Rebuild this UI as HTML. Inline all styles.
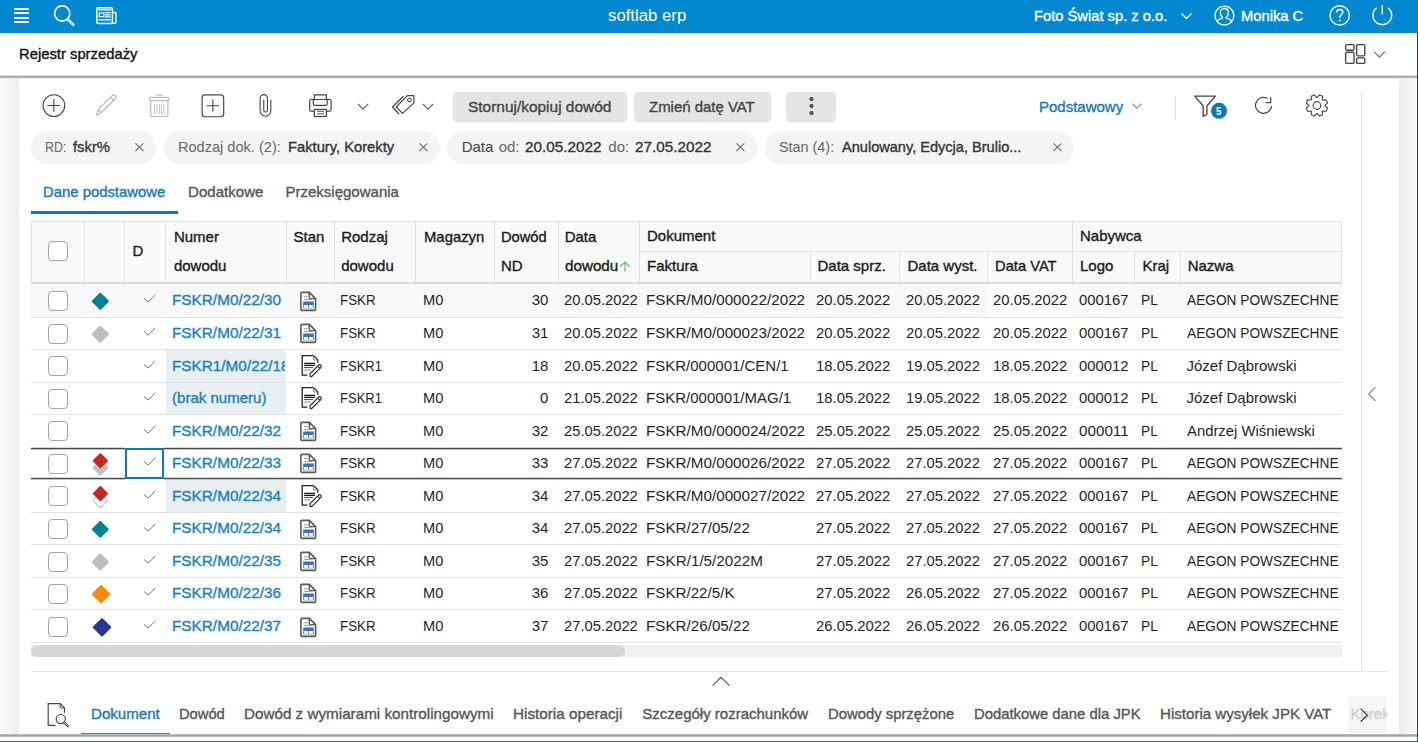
<!DOCTYPE html>
<html><head><meta charset="utf-8"><style>
html,body{margin:0;padding:0;width:1418px;height:742px;overflow:hidden;background:#fff;}
body{position:relative;font-family:"Liberation Sans",sans-serif;}
.t{position:absolute;white-space:nowrap;transform-origin:0 0;}
svg{overflow:visible}
</style></head><body>
<div style="position:absolute;left:0px;top:77px;width:1418px;height:665px;background:#f7f7f7;"></div>
<div style="position:absolute;left:0px;top:77px;width:19px;height:665px;background:linear-gradient(to right,#fafafa,#ededed);"></div>
<div style="position:absolute;left:1399px;top:77px;width:18px;height:665px;background:linear-gradient(to right,#ededed,#fafafa);"></div>
<div style="position:absolute;left:19px;top:79px;width:1380px;height:660px;background:#fff;border-radius:5px 5px 0 0;"></div>
<div style="position:absolute;left:0px;top:0px;width:1418px;height:33px;background:#0288d1;"></div>
<div style="position:absolute;left:14.2px;top:8.05px;width:14.7px;height:1.9px;background:#fff;"></div>
<div style="position:absolute;left:14.2px;top:12.45px;width:14.7px;height:1.9px;background:#fff;"></div>
<div style="position:absolute;left:14.2px;top:16.95px;width:14.7px;height:1.9px;background:#fff;"></div>
<div style="position:absolute;left:14.2px;top:21.15px;width:14.7px;height:1.9px;background:#fff;"></div>
<svg style="position:absolute;left:50px;top:2px;" width="30" height="30" viewBox="0 0 30 30" fill="none"><circle cx="12.2" cy="11.5" r="7.6" stroke="#fff" stroke-width="1.6"/><path d="M17.6 17.2 L23.3 22.8" stroke="#fff" stroke-width="2.6" stroke-linecap="round"/><path d="M17.9 17.5 L23 22.5" stroke="#0288d1" stroke-width="0.7" stroke-linecap="round"/></svg>
<svg style="position:absolute;left:94px;top:5px;" width="26" height="22" viewBox="0 0 26 22" fill="none"><rect x="2.8" y="2.8" width="15.6" height="15.6" rx="1.2" stroke="#fff" stroke-width="1.5"/><path d="M18.4 7.5 H21 a1 1 0 0 1 1 1 V16.8 a1.6 1.6 0 0 1 -1.6 1.6 H18" stroke="#fff" stroke-width="1.4"/><path d="M4 4.6 H17.2" stroke="#cfe6f5" stroke-width="2"/><rect x="5.3" y="8" width="4.6" height="3.6" stroke="#fff" stroke-width="1.2"/><path d="M11 7.7H16.5M11 9.8H16.5M11 11.9H16.5M4.5 14.8H16.8" stroke="#fff" stroke-width="1.2"/></svg>
<div class="t" style="left:607.50px;top:7.60px;font-size:16px;line-height:16px;color:#fff;transform:scaleX(1.0473);">softlab erp</div>
<div class="t" style="left:1033.60px;top:8.15px;font-size:15px;line-height:15px;color:#fff;-webkit-text-stroke:0.35px #fff;transform:scaleX(0.9809);">Foto Świat sp. z o.o.</div>
<svg style="position:absolute;left:1178px;top:10px;" width="16" height="12" viewBox="0 0 16 12" fill="none"><path d="M3.5 3.5 L8.5 8.5 L13.5 3.5" stroke="#fff" stroke-width="1.3"/></svg>
<svg style="position:absolute;left:1212px;top:3px;" width="26" height="26" viewBox="0 0 26 26" fill="none"><circle cx="12.4" cy="12.6" r="9.5" stroke="#fff" stroke-width="1.4"/><path d="M12.3 5.5 c-2.6 0 -4 2 -4 4.4 c0 2 1 3.3 2 4.1 v1.2 c-2.3 0.6 -4.6 1.6 -5.6 3.4 M12.3 5.5 c2.6 0 4 2 4 4.4 c0 2 -1 3.3 -2 4.1 v1.2 c2.3 0.6 4.6 1.6 5.6 3.4" stroke="#fff" stroke-width="1.3"/></svg>
<div class="t" style="left:1240.50px;top:8.25px;font-size:15px;line-height:15px;color:#fff;-webkit-text-stroke:0.35px #fff;transform:scaleX(0.9811);">Monika C</div>
<svg style="position:absolute;left:1327px;top:3px;" width="26" height="26" viewBox="0 0 26 26" fill="none"><circle cx="12.7" cy="12.4" r="9.7" stroke="#fff" stroke-width="1.4"/><path d="M9.6 9.6 c0-1.9 1.4-3.2 3.1-3.2 c1.8 0 3.1 1.2 3.1 2.9 c0 2.3 -3 2.4 -3 4.9 v0.6" stroke="#fff" stroke-width="1.5"/><circle cx="12.8" cy="17.6" r="1" fill="#fff"/></svg>
<svg style="position:absolute;left:1370px;top:3px;" width="26" height="26" viewBox="0 0 26 26" fill="none"><path d="M6.7 4.75 A9.4 9.4 0 1 0 17.9 4.75" stroke="#fff" stroke-width="1.4"/><path d="M12.3 2.2 V11.5" stroke="#fff" stroke-width="1.5"/></svg>
<div style="position:absolute;left:0px;top:33px;width:1418px;height:42px;background:#fff;"></div>
<div class="t" style="left:18.90px;top:46.15px;font-size:15px;line-height:15px;color:#111;-webkit-text-stroke:0.35px #111;transform:scaleX(0.9867);">Rejestr sprzedaży</div>
<svg style="position:absolute;left:1343px;top:42px;" width="24" height="24" viewBox="0 0 24 24" fill="none"><rect x="2.6" y="2.6" width="8.4" height="5.6" rx="1.2" stroke="#444" stroke-width="1.35"/><rect x="2.6" y="10.2" width="8.4" height="11.2" rx="1.2" stroke="#444" stroke-width="1.35"/><rect x="13.6" y="2.6" width="8.2" height="11.2" rx="1.2" stroke="#444" stroke-width="1.35"/><rect x="13.6" y="15.8" width="8.2" height="5.6" rx="1.2" stroke="#444" stroke-width="1.35"/></svg>
<svg style="position:absolute;left:1371px;top:48px;" width="18" height="12" viewBox="0 0 18 12" fill="none"><path d="M3.2 3.8 L8.5 9 L13.8 3.8" stroke="#666" stroke-width="1.1"/></svg>
<div style="position:absolute;left:0px;top:75px;width:1417px;height:1px;background:#dedede;"></div>
<div style="position:absolute;left:0px;top:76px;width:1417px;height:1px;background:#a9a9a9;"></div>
<div style="position:absolute;left:0px;top:77px;width:1417px;height:1px;background:#b0b0b0;"></div>
<div style="position:absolute;left:0px;top:78px;width:1417px;height:1px;background:#ececec;"></div>
<svg style="position:absolute;left:40px;top:92px;" width="28" height="28" viewBox="0 0 28 28" fill="none"><circle cx="13.9" cy="13.6" r="10.85" stroke="#444" stroke-width="1.1"/><path d="M7.3 13.5H20.2M13.8 7.1V19.8" stroke="#444" stroke-width="1.1"/></svg>
<svg style="position:absolute;left:93px;top:92px;" width="28" height="28" viewBox="0 0 28 28" fill="none"><path d="M3.6 23.2 L5.2 17.6 L19.4 3.4 a1.6 1.6 0 0 1 2.3 0 l0.8 0.8 a1.6 1.6 0 0 1 0 2.3 L8.3 20.7 Z M5.2 17.6 L8.3 20.7 M17.6 5.2 L20.7 8.3" stroke="#b5b5b5" stroke-width="1.2" stroke-linejoin="round"/></svg>
<svg style="position:absolute;left:146px;top:92px;" width="28" height="28" viewBox="0 0 28 28" fill="none"><path d="M10.3 3.05H16.4" stroke="#bdbdbd" stroke-width="1.3" stroke-linecap="round"/><rect x="3.5" y="5.3" width="19.6" height="3.4" rx="1.7" stroke="#bdbdbd" stroke-width="1.2"/><path d="M4.7 8.7V22.5a2 2 0 0 0 2 2H19.9a2 2 0 0 0 2-2V8.7" stroke="#bdbdbd" stroke-width="1.2"/><path d="M8.4 12.2V22.3M10.9 12.2V22.3M13.4 12.2V22.3M15.5 12.2V22.3M18 12.2V22.3" stroke="#c4c4c4" stroke-width="1"/></svg>
<svg style="position:absolute;left:199px;top:92px;" width="28" height="28" viewBox="0 0 28 28" fill="none"><rect x="3.1" y="2.9" width="21.6" height="21.8" rx="3" stroke="#444" stroke-width="1.15"/><path d="M13.9 7.6V19.8M7.8 13.7H20" stroke="#444" stroke-width="1.1"/></svg>
<svg style="position:absolute;left:252px;top:92px;" width="28" height="28" viewBox="0 0 28 28" fill="none"><path d="M11.75 7.9V18.2A1.85 1.85 0 0 0 15.45 18.2V6.3A3.67 3.67 0 0 0 8.1 6.3V18.9A5.35 5.35 0 0 0 18.8 18.9V7.9" stroke="#444" stroke-width="1.1"/></svg>
<svg style="position:absolute;left:306px;top:92px;" width="28" height="28" viewBox="0 0 28 28" fill="none"><path d="M8.3 7.5V2.85H20.4V7.5" stroke="#444" stroke-width="1.2"/><path d="M8.3 19.2H5.2a1.5 1.5 0 0 1-1.5-1.5V9a1.5 1.5 0 0 1 1.5-1.5H23.6a1.5 1.5 0 0 1 1.5 1.5V17.7a1.5 1.5 0 0 1-1.5 1.5H20.4" stroke="#444" stroke-width="1.2"/><path d="M7.3 7.5V12a1.4 1.4 0 0 0 1.4 1.4H19.8a1.4 1.4 0 0 0 1.4-1.4V7.5" stroke="#444" stroke-width="1.2"/><rect x="8.3" y="17.4" width="12.1" height="7.1" fill="#fff" stroke="#444" stroke-width="1.2"/><path d="M11 19.4H18M11 21.85H18" stroke="#777" stroke-width="1.1"/></svg>
<svg style="position:absolute;left:355px;top:100px;" width="16" height="12" viewBox="0 0 16 12" fill="none"><path d="M2.8 3.9 L8 9.1 L13.2 3.9" stroke="#555" stroke-width="1.1"/></svg>
<svg style="position:absolute;left:389px;top:92px;" width="30" height="28" viewBox="0 0 30 28" fill="none"><path d="M14.4 4.3L3.5 15L10.1 22.25" stroke="#444" stroke-width="1.2" stroke-linejoin="round"/><path d="M18.4 3.7H24.9V10.9L13.6 21.4L7.1 15Z" stroke="#444" stroke-width="1.2" stroke-linejoin="round"/><circle cx="20.4" cy="8.1" r="1.8" stroke="#444" stroke-width="1.1"/></svg>
<svg style="position:absolute;left:420px;top:100px;" width="16" height="12" viewBox="0 0 16 12" fill="none"><path d="M2.8 3.9 L8 9.1 L13.2 3.9" stroke="#555" stroke-width="1.1"/></svg>
<div style="position:absolute;left:453px;top:92px;width:174px;height:30px;background:#e4e4e4;border-radius:4px;"></div>
<div class="t" style="left:467.50px;top:98.65px;font-size:15px;line-height:15px;color:#444;-webkit-text-stroke:0.35px #444;transform:scaleX(1.0294);">Stornuj/kopiuj dowód</div>
<div style="position:absolute;left:634px;top:92px;width:137px;height:30px;background:#e4e4e4;border-radius:4px;"></div>
<div class="t" style="left:649.00px;top:98.65px;font-size:15px;line-height:15px;color:#444;-webkit-text-stroke:0.35px #444;transform:scaleX(0.9962);">Zmień datę VAT</div>
<div style="position:absolute;left:786px;top:92px;width:50px;height:30px;background:#e4e4e4;border-radius:4px;"></div>
<svg style="position:absolute;left:806px;top:93.5px;" width="10" height="10" viewBox="0 0 10 10" fill="none"><circle cx="5.5" cy="5" r="1.5" stroke="#3a3a3a" stroke-width="1.2" fill="#777"/></svg>
<svg style="position:absolute;left:806px;top:100.5px;" width="10" height="10" viewBox="0 0 10 10" fill="none"><circle cx="5.5" cy="5" r="1.5" stroke="#3a3a3a" stroke-width="1.2" fill="#777"/></svg>
<svg style="position:absolute;left:806px;top:107.7px;" width="10" height="10" viewBox="0 0 10 10" fill="none"><circle cx="5.5" cy="5" r="1.5" stroke="#3a3a3a" stroke-width="1.2" fill="#777"/></svg>
<div class="t" style="left:1039.00px;top:99.45px;font-size:15px;line-height:15px;color:#1776b8;-webkit-text-stroke:0.35px #1776b8;">Podstawowy</div>
<svg style="position:absolute;left:1129px;top:99px;" width="16" height="12" viewBox="0 0 16 12" fill="none"><path d="M3.3 4.6 L7.9 9.2 L12.5 4.6" stroke="#6f8fa6" stroke-width="1.1"/></svg>
<div style="position:absolute;left:1175px;top:96px;width:1px;height:24px;background:#dedede;"></div>
<svg style="position:absolute;left:1190px;top:92px;" width="34" height="30" viewBox="0 0 34 30" fill="none"><path d="M4.7 4.1 H25.4 L16.9 14 V22.3 L13.2 24.4 V14 Z" stroke="#444" stroke-width="1.3" stroke-linejoin="round"/><circle cx="29" cy="18.8" r="8" fill="#0a78bf"/></svg>
<div class="t" style="left:1216.10px;top:105.88px;font-size:10.5px;line-height:10.5px;color:#fff;font-weight:bold;transform:scaleX(0.9294);">5</div>
<svg style="position:absolute;left:1250px;top:92px;" width="28" height="28" viewBox="0 0 28 28" fill="none"><path d="M17.5 6.4A8 8 0 1 0 21.5 14" stroke="#444" stroke-width="1.2"/><path d="M20.7 5.3V10.7H15.7" stroke="#444" stroke-width="1.2"/></svg>
<svg style="position:absolute;left:1303px;top:92px;" width="28" height="28" viewBox="0 0 28 28" fill="none"><path d="M21.80 13.68 L24.51 16.01 L23.18 19.22 L19.61 18.96 L19.36 19.21 L19.62 22.78 L16.41 24.11 L14.08 21.40 L13.72 21.40 L11.39 24.11 L8.18 22.78 L8.44 19.21 L8.19 18.96 L4.62 19.22 L3.29 16.01 L6.00 13.68 L6.00 13.32 L3.29 10.99 L4.62 7.78 L8.19 8.04 L8.44 7.79 L8.18 4.22 L11.39 2.89 L13.72 5.60 L14.08 5.60 L16.41 2.89 L19.62 4.22 L19.36 7.79 L19.61 8.04 L23.18 7.78 L24.51 10.99 L21.80 13.32 Z" stroke="#444" stroke-width="1.05" stroke-linejoin="round"/><circle cx="13.9" cy="13.5" r="3.85" stroke="#444" stroke-width="1.1"/></svg>
<div style="position:absolute;left:31px;top:131px;width:125px;height:32.5px;background:#f4f4f4;border-radius:17px;"></div>
<div class="t" style="left:44.60px;top:138.75px;font-size:15px;line-height:15px;color:#666;transform:scaleX(0.8295);">RD:</div>
<div class="t" style="left:73.40px;top:138.75px;font-size:15px;line-height:15px;color:#333;-webkit-text-stroke:0.35px #333;transform:scaleX(0.9867);">fskr%</div>
<svg style="position:absolute;left:134.2px;top:141.8px;" width="12" height="12" viewBox="0 0 12 12" fill="none"><path d="M1.4 1.4 L9.4 9 M9.4 1.4 L1.4 9" stroke="#707070" stroke-width="1.05"/></svg>
<div style="position:absolute;left:164.2px;top:131px;width:275.5px;height:32.5px;background:#f4f4f4;border-radius:17px;"></div>
<div class="t" style="left:177.90px;top:138.75px;font-size:15px;line-height:15px;color:#666;transform:scaleX(0.9707);">Rodzaj dok. (2):</div>
<div class="t" style="left:288.10px;top:138.75px;font-size:15px;line-height:15px;color:#333;-webkit-text-stroke:0.35px #333;transform:scaleX(0.9815);">Faktury, Korekty</div>
<svg style="position:absolute;left:418px;top:141.8px;" width="12" height="12" viewBox="0 0 12 12" fill="none"><path d="M1.4 1.4 L9.4 9 M9.4 1.4 L1.4 9" stroke="#707070" stroke-width="1.05"/></svg>
<div style="position:absolute;left:447.4px;top:131px;width:309.6px;height:32.5px;background:#f4f4f4;border-radius:17px;"></div>
<div class="t" style="left:461.70px;top:138.75px;font-size:15px;line-height:15px;color:#444;">Data</div>
<div class="t" style="left:498.70px;top:138.75px;font-size:15px;line-height:15px;color:#666;">od:</div>
<div class="t" style="left:525.40px;top:138.75px;font-size:15px;line-height:15px;color:#333;-webkit-text-stroke:0.35px #333;transform:scaleX(1.0173);">20.05.2022</div>
<div class="t" style="left:608.30px;top:138.75px;font-size:15px;line-height:15px;color:#666;">do:</div>
<div class="t" style="left:635.00px;top:138.75px;font-size:15px;line-height:15px;color:#333;-webkit-text-stroke:0.35px #333;transform:scaleX(1.0173);">27.05.2022</div>
<svg style="position:absolute;left:735.2px;top:141.8px;" width="12" height="12" viewBox="0 0 12 12" fill="none"><path d="M1.4 1.4 L9.4 9 M9.4 1.4 L1.4 9" stroke="#707070" stroke-width="1.05"/></svg>
<div style="position:absolute;left:765.3px;top:131px;width:308.4000000000001px;height:32.5px;background:#f4f4f4;border-radius:17px;"></div>
<div class="t" style="left:779.20px;top:138.75px;font-size:15px;line-height:15px;color:#666;transform:scaleX(0.9583);">Stan (4):</div>
<div class="t" style="left:841.50px;top:138.75px;font-size:15px;line-height:15px;color:#333;-webkit-text-stroke:0.35px #333;transform:scaleX(0.9708);">Anulowany, Edycja, Brulio...</div>
<svg style="position:absolute;left:1052px;top:141.8px;" width="12" height="12" viewBox="0 0 12 12" fill="none"><path d="M1.4 1.4 L9.4 9 M9.4 1.4 L1.4 9" stroke="#707070" stroke-width="1.05"/></svg>
<div class="t" style="left:42.80px;top:183.75px;font-size:15px;line-height:15px;color:#1776b8;-webkit-text-stroke:0.35px #1776b8;transform:scaleX(0.9903);">Dane podstawowe</div>
<div class="t" style="left:187.50px;top:183.75px;font-size:15px;line-height:15px;color:#555;-webkit-text-stroke:0.35px #555;transform:scaleX(1.0053);">Dodatkowe</div>
<div class="t" style="left:285.50px;top:183.75px;font-size:15px;line-height:15px;color:#555;-webkit-text-stroke:0.35px #555;">Przeksięgowania</div>
<div style="position:absolute;left:30.6px;top:211px;width:147.3px;height:3px;background:#0a78bf;"></div>
<div style="position:absolute;left:31px;top:222px;width:1311px;height:60px;background:#f9f9f9;"></div>
<div style="position:absolute;left:31px;top:221px;width:1311px;height:1px;background:#e2e2e2;"></div>
<div style="position:absolute;left:31px;top:282px;width:1311px;height:2px;background:#dcdcdc;"></div>
<div style="position:absolute;left:31px;top:222px;width:1px;height:60px;background:#e2e2e2;"></div>
<div style="position:absolute;left:1341px;top:222px;width:1px;height:60px;background:#e2e2e2;"></div>
<div style="position:absolute;left:84px;top:222px;width:1px;height:60px;background:#e2e2e2;"></div>
<div style="position:absolute;left:124px;top:222px;width:1px;height:60px;background:#e2e2e2;"></div>
<div style="position:absolute;left:165px;top:222px;width:1px;height:60px;background:#e2e2e2;"></div>
<div style="position:absolute;left:286px;top:222px;width:1px;height:60px;background:#e2e2e2;"></div>
<div style="position:absolute;left:334px;top:222px;width:1px;height:60px;background:#e2e2e2;"></div>
<div style="position:absolute;left:415px;top:222px;width:1px;height:60px;background:#e2e2e2;"></div>
<div style="position:absolute;left:494px;top:222px;width:1px;height:60px;background:#e2e2e2;"></div>
<div style="position:absolute;left:558px;top:222px;width:1px;height:60px;background:#e2e2e2;"></div>
<div style="position:absolute;left:639px;top:222px;width:1px;height:60px;background:#e2e2e2;"></div>
<div style="position:absolute;left:1072px;top:222px;width:1px;height:60px;background:#e2e2e2;"></div>
<div style="position:absolute;left:810px;top:251px;width:1px;height:31px;background:#e2e2e2;"></div>
<div style="position:absolute;left:899px;top:251px;width:1px;height:31px;background:#e2e2e2;"></div>
<div style="position:absolute;left:987px;top:251px;width:1px;height:31px;background:#e2e2e2;"></div>
<div style="position:absolute;left:1134px;top:251px;width:1px;height:31px;background:#e2e2e2;"></div>
<div style="position:absolute;left:1180px;top:251px;width:1px;height:31px;background:#e2e2e2;"></div>
<div style="position:absolute;left:639px;top:251px;width:702px;height:1px;background:#e2e2e2;"></div>
<div style="position:absolute;left:48px;top:241px;width:20px;height:20px;box-sizing:border-box;border:1.3px solid #a5a5a5;border-radius:4px;background:#fff;"></div>
<div class="t" style="left:132.50px;top:243.35px;font-size:15px;line-height:15px;color:#1a1a1a;-webkit-text-stroke:0.35px #1a1a1a;">D</div>
<div class="t" style="left:173.90px;top:229.35px;font-size:15px;line-height:15px;color:#1a1a1a;-webkit-text-stroke:0.35px #1a1a1a;">Numer</div>
<div class="t" style="left:173.90px;top:257.55px;font-size:15px;line-height:15px;color:#1a1a1a;-webkit-text-stroke:0.35px #1a1a1a;">dowodu</div>
<div class="t" style="left:293.50px;top:229.35px;font-size:15px;line-height:15px;color:#1a1a1a;-webkit-text-stroke:0.35px #1a1a1a;">Stan</div>
<div class="t" style="left:341.20px;top:229.35px;font-size:15px;line-height:15px;color:#1a1a1a;-webkit-text-stroke:0.35px #1a1a1a;">Rodzaj</div>
<div class="t" style="left:341.20px;top:257.55px;font-size:15px;line-height:15px;color:#1a1a1a;-webkit-text-stroke:0.35px #1a1a1a;">dowodu</div>
<div class="t" style="left:423.80px;top:229.35px;font-size:15px;line-height:15px;color:#1a1a1a;-webkit-text-stroke:0.35px #1a1a1a;transform:scaleX(0.9901);">Magazyn</div>
<div class="t" style="left:501.00px;top:229.35px;font-size:15px;line-height:15px;color:#1a1a1a;-webkit-text-stroke:0.35px #1a1a1a;transform:scaleX(0.9764);">Dowód</div>
<div class="t" style="left:501.00px;top:257.55px;font-size:15px;line-height:15px;color:#1a1a1a;-webkit-text-stroke:0.35px #1a1a1a;">ND</div>
<div class="t" style="left:564.70px;top:229.35px;font-size:15px;line-height:15px;color:#1a1a1a;-webkit-text-stroke:0.35px #1a1a1a;">Data</div>
<div class="t" style="left:564.70px;top:257.55px;font-size:15px;line-height:15px;color:#1a1a1a;-webkit-text-stroke:0.35px #1a1a1a;transform:scaleX(1.0133);">dowodu</div>
<svg style="position:absolute;left:617px;top:258px;" width="14" height="16" viewBox="0 0 14 16" fill="none"><path d="M8 4 V13.5 M3.4 8.5 L8 4 L12.6 8.5" stroke="#6cc17c" stroke-width="1.3"/></svg>
<div class="t" style="left:647.00px;top:228.25px;font-size:15px;line-height:15px;color:#1a1a1a;-webkit-text-stroke:0.35px #1a1a1a;">Dokument</div>
<div class="t" style="left:647.00px;top:257.55px;font-size:15px;line-height:15px;color:#1a1a1a;-webkit-text-stroke:0.35px #1a1a1a;">Faktura</div>
<div class="t" style="left:817.50px;top:257.55px;font-size:15px;line-height:15px;color:#1a1a1a;-webkit-text-stroke:0.35px #1a1a1a;">Data sprz.</div>
<div class="t" style="left:907.50px;top:257.55px;font-size:15px;line-height:15px;color:#1a1a1a;-webkit-text-stroke:0.35px #1a1a1a;">Data wyst.</div>
<div class="t" style="left:994.70px;top:257.55px;font-size:15px;line-height:15px;color:#1a1a1a;-webkit-text-stroke:0.35px #1a1a1a;transform:scaleX(0.9809);">Data VAT</div>
<div class="t" style="left:1080.00px;top:228.25px;font-size:15px;line-height:15px;color:#1a1a1a;-webkit-text-stroke:0.35px #1a1a1a;">Nabywca</div>
<div class="t" style="left:1080.00px;top:257.55px;font-size:15px;line-height:15px;color:#1a1a1a;-webkit-text-stroke:0.35px #1a1a1a;">Logo</div>
<div class="t" style="left:1142.50px;top:257.55px;font-size:15px;line-height:15px;color:#1a1a1a;-webkit-text-stroke:0.35px #1a1a1a;">Kraj</div>
<div class="t" style="left:1187.70px;top:257.55px;font-size:15px;line-height:15px;color:#1a1a1a;-webkit-text-stroke:0.35px #1a1a1a;">Nazwa</div>
<div style="position:absolute;left:31px;top:284px;width:1311px;height:33px;background:#f8f8f8;"></div>
<div style="position:absolute;left:987px;top:284px;width:85px;height:33px;background:#fdfdfd;"></div>
<div style="position:absolute;left:31px;top:317px;width:1311px;height:1px;background:#e2e2e2;"></div>
<div style="position:absolute;left:48px;top:291px;width:20px;height:20px;box-sizing:border-box;border:1.3px solid #a5a5a5;border-radius:4px;background:#fff;"></div>
<svg style="position:absolute;left:85px;top:285px;" width="30" height="30" viewBox="0 0 30 30" fill="none"><path d="M15.3 8.8 L22.8 16.3 L15.3 23.8 L7.800000000000001 16.3 Z" fill="#00838f" stroke="#00838f" stroke-width="2" stroke-linejoin="round"/></svg>
<svg style="position:absolute;left:140px;top:291px;" width="18" height="16" viewBox="0 0 18 16" fill="none"><path d="M4 7.5 L8 11.1 L15.3 4" stroke="#777" stroke-width="1"/></svg>
<div class="t" style="left:172.30px;top:292.15px;font-size:15px;line-height:15px;color:#1a7fc2;-webkit-text-stroke:0.35px #1a7fc2;transform:scaleX(1.0216);">FSKR/M0/22/30</div>
<svg style="position:absolute;left:298px;top:289.5px;" width="22" height="22" viewBox="0 0 22 22" fill="none"><path d="M3.9 2.4H11.3L17.6 8.6V19.4a1 1 0 0 1-1 1H3.9a1 1 0 0 1-1-1V3.4a1 1 0 0 1 1-1Z" stroke="#5a5a5a" stroke-width="1.6" fill="#fff"/><path d="M11.3 2.4V7.6a1 1 0 0 0 1 1H17.6" stroke="#5a5a5a" stroke-width="1.4"/><path d="M6 6.8H9.8M6 9.4H14.4" stroke="#9a9a9a" stroke-width="1"/><rect x="5.2" y="11.5" width="10.6" height="3.8" fill="#2f77c1"/><rect x="5.2" y="15.3" width="10.6" height="2.6" fill="#fff"/><path d="M5.6 15.3V18M10.5 11.5V18M15.4 15.3V18" stroke="#6a6a6a" stroke-width="0.9"/><path d="M5.2 18.2H15.8" stroke="#b8b8b8" stroke-width="1"/></svg>
<div class="t" style="left:339.70px;top:292.15px;font-size:15px;line-height:15px;color:#1f1f1f;transform:scaleX(0.8900);">FSKR</div>
<div class="t" style="left:422.50px;top:292.15px;font-size:15px;line-height:15px;color:#1f1f1f;transform:scaleX(0.9760);">M0</div>
<div class="t" style="left:531.70px;top:292.15px;font-size:15px;line-height:15px;color:#1f1f1f;">30</div>
<div class="t" style="left:563.80px;top:292.15px;font-size:15px;line-height:15px;color:#1f1f1f;transform:scaleX(0.9827);">20.05.2022</div>
<div class="t" style="left:646.10px;top:292.15px;font-size:15px;line-height:15px;color:#1f1f1f;transform:scaleX(1.0147);">FSKR/M0/000022/2022</div>
<div class="t" style="left:816.10px;top:292.15px;font-size:15px;line-height:15px;color:#1f1f1f;transform:scaleX(0.9893);">20.05.2022</div>
<div class="t" style="left:906.30px;top:292.15px;font-size:15px;line-height:15px;color:#1f1f1f;transform:scaleX(0.9840);">20.05.2022</div>
<div class="t" style="left:993.40px;top:292.15px;font-size:15px;line-height:15px;color:#1f1f1f;transform:scaleX(0.9893);">20.05.2022</div>
<div class="t" style="left:1078.70px;top:292.15px;font-size:15px;line-height:15px;color:#1f1f1f;transform:scaleX(0.9900);">000167</div>
<div class="t" style="left:1141.20px;top:292.15px;font-size:15px;line-height:15px;color:#1f1f1f;transform:scaleX(0.9126);">PL</div>
<div style="position:absolute;left:1180px;top:284px;width:162px;height:33px;overflow:hidden;">
<div class="t" style="left:6.50px;top:8.15px;font-size:15px;line-height:15px;color:#1f1f1f;transform:scaleX(0.9138);">AEGON POWSZECHNE</div>
</div>
<div style="position:absolute;left:31px;top:349px;width:1311px;height:1px;background:#e2e2e2;"></div>
<div style="position:absolute;left:48px;top:324px;width:20px;height:20px;box-sizing:border-box;border:1.3px solid #a5a5a5;border-radius:4px;background:#fff;"></div>
<svg style="position:absolute;left:85px;top:318px;" width="30" height="30" viewBox="0 0 30 30" fill="none"><path d="M15.3 8.700000000000035 L22.8 16.200000000000035 L15.3 23.700000000000035 L7.800000000000001 16.200000000000035 Z" fill="#bdbdbd" stroke="#bdbdbd" stroke-width="2" stroke-linejoin="round"/></svg>
<svg style="position:absolute;left:140px;top:324px;" width="18" height="16" viewBox="0 0 18 16" fill="none"><path d="M4 7.5 L8 11.1 L15.3 4" stroke="#777" stroke-width="1"/></svg>
<div class="t" style="left:172.30px;top:325.05px;font-size:15px;line-height:15px;color:#1a7fc2;-webkit-text-stroke:0.35px #1a7fc2;transform:scaleX(1.0216);">FSKR/M0/22/31</div>
<svg style="position:absolute;left:298px;top:322.40000000000003px;" width="22" height="22" viewBox="0 0 22 22" fill="none"><path d="M3.9 2.4H11.3L17.6 8.6V19.4a1 1 0 0 1-1 1H3.9a1 1 0 0 1-1-1V3.4a1 1 0 0 1 1-1Z" stroke="#5a5a5a" stroke-width="1.6" fill="#fff"/><path d="M11.3 2.4V7.6a1 1 0 0 0 1 1H17.6" stroke="#5a5a5a" stroke-width="1.4"/><path d="M6 6.8H9.8M6 9.4H14.4" stroke="#9a9a9a" stroke-width="1"/><rect x="5.2" y="11.5" width="10.6" height="3.8" fill="#2f77c1"/><rect x="5.2" y="15.3" width="10.6" height="2.6" fill="#fff"/><path d="M5.6 15.3V18M10.5 11.5V18M15.4 15.3V18" stroke="#6a6a6a" stroke-width="0.9"/><path d="M5.2 18.2H15.8" stroke="#b8b8b8" stroke-width="1"/></svg>
<div class="t" style="left:339.70px;top:325.05px;font-size:15px;line-height:15px;color:#1f1f1f;transform:scaleX(0.8900);">FSKR</div>
<div class="t" style="left:422.50px;top:325.05px;font-size:15px;line-height:15px;color:#1f1f1f;transform:scaleX(0.9760);">M0</div>
<div class="t" style="left:531.70px;top:325.05px;font-size:15px;line-height:15px;color:#1f1f1f;">31</div>
<div class="t" style="left:563.80px;top:325.05px;font-size:15px;line-height:15px;color:#1f1f1f;transform:scaleX(0.9827);">20.05.2022</div>
<div class="t" style="left:646.10px;top:325.05px;font-size:15px;line-height:15px;color:#1f1f1f;transform:scaleX(1.0147);">FSKR/M0/000023/2022</div>
<div class="t" style="left:816.10px;top:325.05px;font-size:15px;line-height:15px;color:#1f1f1f;transform:scaleX(0.9893);">20.05.2022</div>
<div class="t" style="left:906.30px;top:325.05px;font-size:15px;line-height:15px;color:#1f1f1f;transform:scaleX(0.9840);">20.05.2022</div>
<div class="t" style="left:993.40px;top:325.05px;font-size:15px;line-height:15px;color:#1f1f1f;transform:scaleX(0.9893);">20.05.2022</div>
<div class="t" style="left:1078.70px;top:325.05px;font-size:15px;line-height:15px;color:#1f1f1f;transform:scaleX(0.9900);">000167</div>
<div class="t" style="left:1141.20px;top:325.05px;font-size:15px;line-height:15px;color:#1f1f1f;transform:scaleX(0.9126);">PL</div>
<div style="position:absolute;left:1180px;top:317px;width:162px;height:32px;overflow:hidden;">
<div class="t" style="left:6.50px;top:8.05px;font-size:15px;line-height:15px;color:#1f1f1f;transform:scaleX(0.9138);">AEGON POWSZECHNE</div>
</div>
<div style="position:absolute;left:165.5px;top:350px;width:120px;height:32px;background:#e9eff0;"></div>
<div style="position:absolute;left:31px;top:382px;width:1311px;height:1px;background:#e2e2e2;"></div>
<div style="position:absolute;left:48px;top:356px;width:20px;height:20px;box-sizing:border-box;border:1.3px solid #a5a5a5;border-radius:4px;background:#fff;"></div>
<svg style="position:absolute;left:140px;top:357px;" width="18" height="16" viewBox="0 0 18 16" fill="none"><path d="M4 7.5 L8 11.1 L15.3 4" stroke="#777" stroke-width="1"/></svg>
<div style="position:absolute;left:165px;top:349px;width:120px;height:33px;overflow:hidden;">
<div class="t" style="left:7.30px;top:8.65px;font-size:15px;line-height:15px;color:#1a7fc2;-webkit-text-stroke:0.35px #1a7fc2;transform:scaleX(1.0209);">FSKR1/M0/22/18</div>
</div>
<svg style="position:absolute;left:298px;top:354.0px;" width="26" height="24" viewBox="0 0 26 24" fill="none"><path d="M9.4 21.1H4.2V1.6H15.6L19.8 5.8V8.8" stroke="#222" stroke-width="1.3" fill="none"/><path d="M15.6 1.6V5.4a0.6 0.6 0 0 0 0.6 0.6H19.8" stroke="#888" stroke-width="1.1"/><path d="M6.2 9.4H17M6.2 11.4H17" stroke="#111" stroke-width="1.1"/><path d="M6.2 13.5H14.9" stroke="#555" stroke-width="1.1"/><path d="M6.2 15.9H12.8" stroke="#9a9a9a" stroke-width="1.2"/><path d="M12.2 22.6L11.9 19.8L20.6 11.1a1.4 1.4 0 0 1 2 0l0.3 0.3a1.4 1.4 0 0 1 0 2L14.2 22.1ZM19.6 12.1L21.9 14.4" stroke="#222" stroke-width="1.15" fill="#fff" stroke-linejoin="round"/></svg>
<div class="t" style="left:339.70px;top:357.65px;font-size:15px;line-height:15px;color:#1f1f1f;transform:scaleX(0.8675);">FSKR1</div>
<div class="t" style="left:422.50px;top:357.65px;font-size:15px;line-height:15px;color:#1f1f1f;transform:scaleX(0.9760);">M0</div>
<div class="t" style="left:531.70px;top:357.65px;font-size:15px;line-height:15px;color:#1f1f1f;">18</div>
<div class="t" style="left:563.80px;top:357.65px;font-size:15px;line-height:15px;color:#1f1f1f;transform:scaleX(0.9827);">20.05.2022</div>
<div class="t" style="left:646.10px;top:357.65px;font-size:15px;line-height:15px;color:#1f1f1f;">FSKR/000001/CEN/1</div>
<div class="t" style="left:816.10px;top:357.65px;font-size:15px;line-height:15px;color:#1f1f1f;transform:scaleX(0.9893);">18.05.2022</div>
<div class="t" style="left:906.30px;top:357.65px;font-size:15px;line-height:15px;color:#1f1f1f;transform:scaleX(0.9840);">19.05.2022</div>
<div class="t" style="left:993.40px;top:357.65px;font-size:15px;line-height:15px;color:#1f1f1f;transform:scaleX(0.9893);">18.05.2022</div>
<div class="t" style="left:1078.70px;top:357.65px;font-size:15px;line-height:15px;color:#1f1f1f;transform:scaleX(0.9900);">000012</div>
<div class="t" style="left:1141.20px;top:357.65px;font-size:15px;line-height:15px;color:#1f1f1f;transform:scaleX(0.9126);">PL</div>
<div style="position:absolute;left:1180px;top:349px;width:162px;height:33px;overflow:hidden;">
<div class="t" style="left:6.50px;top:8.65px;font-size:15px;line-height:15px;color:#1f1f1f;">Józef Dąbrowski</div>
</div>
<div style="position:absolute;left:165.5px;top:383px;width:120px;height:31px;background:#e9eff0;"></div>
<div style="position:absolute;left:31px;top:414px;width:1311px;height:1px;background:#e2e2e2;"></div>
<div style="position:absolute;left:48px;top:389px;width:20px;height:20px;box-sizing:border-box;border:1.3px solid #a5a5a5;border-radius:4px;background:#fff;"></div>
<svg style="position:absolute;left:140px;top:389px;" width="18" height="16" viewBox="0 0 18 16" fill="none"><path d="M4 7.5 L8 11.1 L15.3 4" stroke="#777" stroke-width="1"/></svg>
<div class="t" style="left:172.30px;top:390.05px;font-size:15px;line-height:15px;color:#1a7fc2;-webkit-text-stroke:0.35px #1a7fc2;transform:scaleX(1.0032);">(brak numeru)</div>
<svg style="position:absolute;left:298px;top:386.40000000000003px;" width="26" height="24" viewBox="0 0 26 24" fill="none"><path d="M9.4 21.1H4.2V1.6H15.6L19.8 5.8V8.8" stroke="#222" stroke-width="1.3" fill="none"/><path d="M15.6 1.6V5.4a0.6 0.6 0 0 0 0.6 0.6H19.8" stroke="#888" stroke-width="1.1"/><path d="M6.2 9.4H17M6.2 11.4H17" stroke="#111" stroke-width="1.1"/><path d="M6.2 13.5H14.9" stroke="#555" stroke-width="1.1"/><path d="M6.2 15.9H12.8" stroke="#9a9a9a" stroke-width="1.2"/><path d="M12.2 22.6L11.9 19.8L20.6 11.1a1.4 1.4 0 0 1 2 0l0.3 0.3a1.4 1.4 0 0 1 0 2L14.2 22.1ZM19.6 12.1L21.9 14.4" stroke="#222" stroke-width="1.15" fill="#fff" stroke-linejoin="round"/></svg>
<div class="t" style="left:339.70px;top:390.05px;font-size:15px;line-height:15px;color:#1f1f1f;transform:scaleX(0.8675);">FSKR1</div>
<div class="t" style="left:422.50px;top:390.05px;font-size:15px;line-height:15px;color:#1f1f1f;transform:scaleX(0.9760);">M0</div>
<div class="t" style="left:540.10px;top:390.05px;font-size:15px;line-height:15px;color:#1f1f1f;">0</div>
<div class="t" style="left:563.80px;top:390.05px;font-size:15px;line-height:15px;color:#1f1f1f;transform:scaleX(0.9827);">21.05.2022</div>
<div class="t" style="left:646.10px;top:390.05px;font-size:15px;line-height:15px;color:#1f1f1f;">FSKR/000001/MAG/1</div>
<div class="t" style="left:816.10px;top:390.05px;font-size:15px;line-height:15px;color:#1f1f1f;transform:scaleX(0.9893);">18.05.2022</div>
<div class="t" style="left:906.30px;top:390.05px;font-size:15px;line-height:15px;color:#1f1f1f;transform:scaleX(0.9840);">19.05.2022</div>
<div class="t" style="left:993.40px;top:390.05px;font-size:15px;line-height:15px;color:#1f1f1f;transform:scaleX(0.9893);">18.05.2022</div>
<div class="t" style="left:1078.70px;top:390.05px;font-size:15px;line-height:15px;color:#1f1f1f;transform:scaleX(0.9900);">000012</div>
<div class="t" style="left:1141.20px;top:390.05px;font-size:15px;line-height:15px;color:#1f1f1f;transform:scaleX(0.9126);">PL</div>
<div style="position:absolute;left:1180px;top:382px;width:162px;height:32px;overflow:hidden;">
<div class="t" style="left:6.50px;top:8.05px;font-size:15px;line-height:15px;color:#1f1f1f;">Józef Dąbrowski</div>
</div>
<div style="position:absolute;left:31px;top:448px;width:1311px;height:1px;background:#e2e2e2;"></div>
<div style="position:absolute;left:48px;top:421px;width:20px;height:20px;box-sizing:border-box;border:1.3px solid #a5a5a5;border-radius:4px;background:#fff;"></div>
<svg style="position:absolute;left:140px;top:422px;" width="18" height="16" viewBox="0 0 18 16" fill="none"><path d="M4 7.5 L8 11.1 L15.3 4" stroke="#777" stroke-width="1"/></svg>
<div class="t" style="left:172.30px;top:422.65px;font-size:15px;line-height:15px;color:#1a7fc2;-webkit-text-stroke:0.35px #1a7fc2;transform:scaleX(1.0216);">FSKR/M0/22/32</div>
<svg style="position:absolute;left:298px;top:420.0px;" width="22" height="22" viewBox="0 0 22 22" fill="none"><path d="M3.9 2.4H11.3L17.6 8.6V19.4a1 1 0 0 1-1 1H3.9a1 1 0 0 1-1-1V3.4a1 1 0 0 1 1-1Z" stroke="#5a5a5a" stroke-width="1.6" fill="#fff"/><path d="M11.3 2.4V7.6a1 1 0 0 0 1 1H17.6" stroke="#5a5a5a" stroke-width="1.4"/><path d="M6 6.8H9.8M6 9.4H14.4" stroke="#9a9a9a" stroke-width="1"/><rect x="5.2" y="11.5" width="10.6" height="3.8" fill="#2f77c1"/><rect x="5.2" y="15.3" width="10.6" height="2.6" fill="#fff"/><path d="M5.6 15.3V18M10.5 11.5V18M15.4 15.3V18" stroke="#6a6a6a" stroke-width="0.9"/><path d="M5.2 18.2H15.8" stroke="#b8b8b8" stroke-width="1"/></svg>
<div class="t" style="left:339.70px;top:422.65px;font-size:15px;line-height:15px;color:#1f1f1f;transform:scaleX(0.8900);">FSKR</div>
<div class="t" style="left:422.50px;top:422.65px;font-size:15px;line-height:15px;color:#1f1f1f;transform:scaleX(0.9760);">M0</div>
<div class="t" style="left:531.70px;top:422.65px;font-size:15px;line-height:15px;color:#1f1f1f;">32</div>
<div class="t" style="left:563.80px;top:422.65px;font-size:15px;line-height:15px;color:#1f1f1f;transform:scaleX(0.9827);">25.05.2022</div>
<div class="t" style="left:646.10px;top:422.65px;font-size:15px;line-height:15px;color:#1f1f1f;transform:scaleX(1.0147);">FSKR/M0/000024/2022</div>
<div class="t" style="left:816.10px;top:422.65px;font-size:15px;line-height:15px;color:#1f1f1f;transform:scaleX(0.9893);">25.05.2022</div>
<div class="t" style="left:906.30px;top:422.65px;font-size:15px;line-height:15px;color:#1f1f1f;transform:scaleX(0.9840);">25.05.2022</div>
<div class="t" style="left:993.40px;top:422.65px;font-size:15px;line-height:15px;color:#1f1f1f;transform:scaleX(0.9893);">25.05.2022</div>
<div class="t" style="left:1078.70px;top:422.65px;font-size:15px;line-height:15px;color:#1f1f1f;transform:scaleX(1.0143);">000011</div>
<div class="t" style="left:1141.20px;top:422.65px;font-size:15px;line-height:15px;color:#1f1f1f;transform:scaleX(0.9126);">PL</div>
<div style="position:absolute;left:1180px;top:414px;width:162px;height:34px;overflow:hidden;">
<div class="t" style="left:6.50px;top:8.65px;font-size:15px;line-height:15px;color:#1f1f1f;transform:scaleX(0.9892);">Andrzej Wiśniewski</div>
</div>
<div style="position:absolute;left:31px;top:478px;width:1311px;height:1px;background:#e2e2e2;"></div>
<div style="position:absolute;left:48px;top:454px;width:20px;height:20px;box-sizing:border-box;border:1.3px solid #a5a5a5;border-radius:4px;background:#fff;"></div>
<svg style="position:absolute;left:85px;top:448px;" width="30" height="30" viewBox="0 0 30 30" fill="none"><path d="M15.4 12.800000000000022 L22.4 19.800000000000022 L15.4 26.800000000000022 L8.4 19.800000000000022 Z" fill="#c4c4c4" stroke="#c4c4c4" stroke-width="2" stroke-linejoin="round"/><path d="M15.4 6.200000000000022 L22.0 12.800000000000022 L15.4 19.40000000000002 L8.8 12.800000000000022 Z" fill="#c62828" stroke="#c62828" stroke-width="2" stroke-linejoin="round"/></svg>
<svg style="position:absolute;left:140px;top:454px;" width="18" height="16" viewBox="0 0 18 16" fill="none"><path d="M4 7.5 L8 11.1 L15.3 4" stroke="#777" stroke-width="1"/></svg>
<div class="t" style="left:172.30px;top:454.75px;font-size:15px;line-height:15px;color:#1a7fc2;-webkit-text-stroke:0.35px #1a7fc2;transform:scaleX(1.0216);">FSKR/M0/22/33</div>
<svg style="position:absolute;left:298px;top:452.1px;" width="22" height="22" viewBox="0 0 22 22" fill="none"><path d="M3.9 2.4H11.3L17.6 8.6V19.4a1 1 0 0 1-1 1H3.9a1 1 0 0 1-1-1V3.4a1 1 0 0 1 1-1Z" stroke="#5a5a5a" stroke-width="1.6" fill="#fff"/><path d="M11.3 2.4V7.6a1 1 0 0 0 1 1H17.6" stroke="#5a5a5a" stroke-width="1.4"/><path d="M6 6.8H9.8M6 9.4H14.4" stroke="#9a9a9a" stroke-width="1"/><rect x="5.2" y="11.5" width="10.6" height="3.8" fill="#2f77c1"/><rect x="5.2" y="15.3" width="10.6" height="2.6" fill="#fff"/><path d="M5.6 15.3V18M10.5 11.5V18M15.4 15.3V18" stroke="#6a6a6a" stroke-width="0.9"/><path d="M5.2 18.2H15.8" stroke="#b8b8b8" stroke-width="1"/></svg>
<div class="t" style="left:339.70px;top:454.75px;font-size:15px;line-height:15px;color:#1f1f1f;transform:scaleX(0.8900);">FSKR</div>
<div class="t" style="left:422.50px;top:454.75px;font-size:15px;line-height:15px;color:#1f1f1f;transform:scaleX(0.9760);">M0</div>
<div class="t" style="left:531.70px;top:454.75px;font-size:15px;line-height:15px;color:#1f1f1f;">33</div>
<div class="t" style="left:563.80px;top:454.75px;font-size:15px;line-height:15px;color:#1f1f1f;transform:scaleX(0.9827);">27.05.2022</div>
<div class="t" style="left:646.10px;top:454.75px;font-size:15px;line-height:15px;color:#1f1f1f;transform:scaleX(1.0147);">FSKR/M0/000026/2022</div>
<div class="t" style="left:816.10px;top:454.75px;font-size:15px;line-height:15px;color:#1f1f1f;transform:scaleX(0.9893);">27.05.2022</div>
<div class="t" style="left:906.30px;top:454.75px;font-size:15px;line-height:15px;color:#1f1f1f;transform:scaleX(0.9840);">27.05.2022</div>
<div class="t" style="left:993.40px;top:454.75px;font-size:15px;line-height:15px;color:#1f1f1f;transform:scaleX(0.9893);">27.05.2022</div>
<div class="t" style="left:1078.70px;top:454.75px;font-size:15px;line-height:15px;color:#1f1f1f;transform:scaleX(0.9900);">000167</div>
<div class="t" style="left:1141.20px;top:454.75px;font-size:15px;line-height:15px;color:#1f1f1f;transform:scaleX(0.9126);">PL</div>
<div style="position:absolute;left:1180px;top:448px;width:162px;height:30px;overflow:hidden;">
<div class="t" style="left:6.50px;top:6.75px;font-size:15px;line-height:15px;color:#1f1f1f;transform:scaleX(0.9138);">AEGON POWSZECHNE</div>
</div>
<div style="position:absolute;left:165.5px;top:479px;width:120px;height:33px;background:#e9eff0;"></div>
<div style="position:absolute;left:31px;top:512px;width:1311px;height:1px;background:#e2e2e2;"></div>
<div style="position:absolute;left:48px;top:486px;width:20px;height:20px;box-sizing:border-box;border:1.3px solid #a5a5a5;border-radius:4px;background:#fff;"></div>
<svg style="position:absolute;left:85px;top:481px;" width="30" height="30" viewBox="0 0 30 30" fill="none"><path d="M15.4 12.200000000000033 L22.8 19.600000000000033 L15.4 27.000000000000036 L8.0 19.600000000000033 Z" fill="#fff" stroke="#c8c8c8" stroke-width="1.1" stroke-linejoin="round"/><path d="M15.4 6.000000000000034 L22.0 12.600000000000033 L15.4 19.20000000000003 L8.8 12.600000000000033 Z" fill="#c62828" stroke="#c62828" stroke-width="2" stroke-linejoin="round"/></svg>
<svg style="position:absolute;left:140px;top:487px;" width="18" height="16" viewBox="0 0 18 16" fill="none"><path d="M4 7.5 L8 11.1 L15.3 4" stroke="#777" stroke-width="1"/></svg>
<div class="t" style="left:172.30px;top:487.55px;font-size:15px;line-height:15px;color:#1a7fc2;-webkit-text-stroke:0.35px #1a7fc2;transform:scaleX(1.0216);">FSKR/M0/22/34</div>
<svg style="position:absolute;left:298px;top:483.90000000000003px;" width="26" height="24" viewBox="0 0 26 24" fill="none"><path d="M9.4 21.1H4.2V1.6H15.6L19.8 5.8V8.8" stroke="#222" stroke-width="1.3" fill="none"/><path d="M15.6 1.6V5.4a0.6 0.6 0 0 0 0.6 0.6H19.8" stroke="#888" stroke-width="1.1"/><path d="M6.2 9.4H17M6.2 11.4H17" stroke="#111" stroke-width="1.1"/><path d="M6.2 13.5H14.9" stroke="#555" stroke-width="1.1"/><path d="M6.2 15.9H12.8" stroke="#9a9a9a" stroke-width="1.2"/><path d="M12.2 22.6L11.9 19.8L20.6 11.1a1.4 1.4 0 0 1 2 0l0.3 0.3a1.4 1.4 0 0 1 0 2L14.2 22.1ZM19.6 12.1L21.9 14.4" stroke="#222" stroke-width="1.15" fill="#fff" stroke-linejoin="round"/></svg>
<div class="t" style="left:339.70px;top:487.55px;font-size:15px;line-height:15px;color:#1f1f1f;transform:scaleX(0.8900);">FSKR</div>
<div class="t" style="left:422.50px;top:487.55px;font-size:15px;line-height:15px;color:#1f1f1f;transform:scaleX(0.9760);">M0</div>
<div class="t" style="left:531.70px;top:487.55px;font-size:15px;line-height:15px;color:#1f1f1f;">34</div>
<div class="t" style="left:563.80px;top:487.55px;font-size:15px;line-height:15px;color:#1f1f1f;transform:scaleX(0.9827);">27.05.2022</div>
<div class="t" style="left:646.10px;top:487.55px;font-size:15px;line-height:15px;color:#1f1f1f;transform:scaleX(1.0147);">FSKR/M0/000027/2022</div>
<div class="t" style="left:816.10px;top:487.55px;font-size:15px;line-height:15px;color:#1f1f1f;transform:scaleX(0.9893);">27.05.2022</div>
<div class="t" style="left:906.30px;top:487.55px;font-size:15px;line-height:15px;color:#1f1f1f;transform:scaleX(0.9840);">27.05.2022</div>
<div class="t" style="left:993.40px;top:487.55px;font-size:15px;line-height:15px;color:#1f1f1f;transform:scaleX(0.9893);">27.05.2022</div>
<div class="t" style="left:1078.70px;top:487.55px;font-size:15px;line-height:15px;color:#1f1f1f;transform:scaleX(0.9900);">000167</div>
<div class="t" style="left:1141.20px;top:487.55px;font-size:15px;line-height:15px;color:#1f1f1f;transform:scaleX(0.9126);">PL</div>
<div style="position:absolute;left:1180px;top:478px;width:162px;height:34px;overflow:hidden;">
<div class="t" style="left:6.50px;top:9.55px;font-size:15px;line-height:15px;color:#1f1f1f;transform:scaleX(0.9138);">AEGON POWSZECHNE</div>
</div>
<div style="position:absolute;left:31px;top:544px;width:1311px;height:1px;background:#e2e2e2;"></div>
<div style="position:absolute;left:48px;top:519px;width:20px;height:20px;box-sizing:border-box;border:1.3px solid #a5a5a5;border-radius:4px;background:#fff;"></div>
<svg style="position:absolute;left:85px;top:514px;" width="30" height="30" viewBox="0 0 30 30" fill="none"><path d="M15.3 7.9000000000000234 L22.8 15.400000000000023 L15.3 22.900000000000023 L7.800000000000001 15.400000000000023 Z" fill="#00838f" stroke="#00838f" stroke-width="2" stroke-linejoin="round"/></svg>
<svg style="position:absolute;left:140px;top:520px;" width="18" height="16" viewBox="0 0 18 16" fill="none"><path d="M4 7.5 L8 11.1 L15.3 4" stroke="#777" stroke-width="1"/></svg>
<div class="t" style="left:172.30px;top:520.25px;font-size:15px;line-height:15px;color:#1a7fc2;-webkit-text-stroke:0.35px #1a7fc2;transform:scaleX(1.0216);">FSKR/M0/22/34</div>
<svg style="position:absolute;left:298px;top:517.6px;" width="22" height="22" viewBox="0 0 22 22" fill="none"><path d="M3.9 2.4H11.3L17.6 8.6V19.4a1 1 0 0 1-1 1H3.9a1 1 0 0 1-1-1V3.4a1 1 0 0 1 1-1Z" stroke="#5a5a5a" stroke-width="1.6" fill="#fff"/><path d="M11.3 2.4V7.6a1 1 0 0 0 1 1H17.6" stroke="#5a5a5a" stroke-width="1.4"/><path d="M6 6.8H9.8M6 9.4H14.4" stroke="#9a9a9a" stroke-width="1"/><rect x="5.2" y="11.5" width="10.6" height="3.8" fill="#2f77c1"/><rect x="5.2" y="15.3" width="10.6" height="2.6" fill="#fff"/><path d="M5.6 15.3V18M10.5 11.5V18M15.4 15.3V18" stroke="#6a6a6a" stroke-width="0.9"/><path d="M5.2 18.2H15.8" stroke="#b8b8b8" stroke-width="1"/></svg>
<div class="t" style="left:339.70px;top:520.25px;font-size:15px;line-height:15px;color:#1f1f1f;transform:scaleX(0.8900);">FSKR</div>
<div class="t" style="left:422.50px;top:520.25px;font-size:15px;line-height:15px;color:#1f1f1f;transform:scaleX(0.9760);">M0</div>
<div class="t" style="left:531.70px;top:520.25px;font-size:15px;line-height:15px;color:#1f1f1f;">34</div>
<div class="t" style="left:563.80px;top:520.25px;font-size:15px;line-height:15px;color:#1f1f1f;transform:scaleX(0.9827);">27.05.2022</div>
<div class="t" style="left:646.10px;top:520.25px;font-size:15px;line-height:15px;color:#1f1f1f;transform:scaleX(1.0136);">FSKR/27/05/22</div>
<div class="t" style="left:816.10px;top:520.25px;font-size:15px;line-height:15px;color:#1f1f1f;transform:scaleX(0.9893);">27.05.2022</div>
<div class="t" style="left:906.30px;top:520.25px;font-size:15px;line-height:15px;color:#1f1f1f;transform:scaleX(0.9840);">27.05.2022</div>
<div class="t" style="left:993.40px;top:520.25px;font-size:15px;line-height:15px;color:#1f1f1f;transform:scaleX(0.9893);">27.05.2022</div>
<div class="t" style="left:1078.70px;top:520.25px;font-size:15px;line-height:15px;color:#1f1f1f;transform:scaleX(0.9900);">000167</div>
<div class="t" style="left:1141.20px;top:520.25px;font-size:15px;line-height:15px;color:#1f1f1f;transform:scaleX(0.9126);">PL</div>
<div style="position:absolute;left:1180px;top:512px;width:162px;height:32px;overflow:hidden;">
<div class="t" style="left:6.50px;top:8.25px;font-size:15px;line-height:15px;color:#1f1f1f;transform:scaleX(0.9138);">AEGON POWSZECHNE</div>
</div>
<div style="position:absolute;left:31px;top:577px;width:1311px;height:1px;background:#e2e2e2;"></div>
<div style="position:absolute;left:48px;top:552px;width:20px;height:20px;box-sizing:border-box;border:1.3px solid #a5a5a5;border-radius:4px;background:#fff;"></div>
<svg style="position:absolute;left:85px;top:546px;" width="30" height="30" viewBox="0 0 30 30" fill="none"><path d="M15.3 8.500000000000046 L22.8 16.000000000000046 L15.3 23.500000000000046 L7.800000000000001 16.000000000000046 Z" fill="#bdbdbd" stroke="#bdbdbd" stroke-width="2" stroke-linejoin="round"/></svg>
<svg style="position:absolute;left:140px;top:552px;" width="18" height="16" viewBox="0 0 18 16" fill="none"><path d="M4 7.5 L8 11.1 L15.3 4" stroke="#777" stroke-width="1"/></svg>
<div class="t" style="left:172.30px;top:552.85px;font-size:15px;line-height:15px;color:#1a7fc2;-webkit-text-stroke:0.35px #1a7fc2;transform:scaleX(1.0216);">FSKR/M0/22/35</div>
<svg style="position:absolute;left:298px;top:550.2px;" width="22" height="22" viewBox="0 0 22 22" fill="none"><path d="M3.9 2.4H11.3L17.6 8.6V19.4a1 1 0 0 1-1 1H3.9a1 1 0 0 1-1-1V3.4a1 1 0 0 1 1-1Z" stroke="#5a5a5a" stroke-width="1.6" fill="#fff"/><path d="M11.3 2.4V7.6a1 1 0 0 0 1 1H17.6" stroke="#5a5a5a" stroke-width="1.4"/><path d="M6 6.8H9.8M6 9.4H14.4" stroke="#9a9a9a" stroke-width="1"/><rect x="5.2" y="11.5" width="10.6" height="3.8" fill="#2f77c1"/><rect x="5.2" y="15.3" width="10.6" height="2.6" fill="#fff"/><path d="M5.6 15.3V18M10.5 11.5V18M15.4 15.3V18" stroke="#6a6a6a" stroke-width="0.9"/><path d="M5.2 18.2H15.8" stroke="#b8b8b8" stroke-width="1"/></svg>
<div class="t" style="left:339.70px;top:552.85px;font-size:15px;line-height:15px;color:#1f1f1f;transform:scaleX(0.8900);">FSKR</div>
<div class="t" style="left:422.50px;top:552.85px;font-size:15px;line-height:15px;color:#1f1f1f;transform:scaleX(0.9760);">M0</div>
<div class="t" style="left:531.70px;top:552.85px;font-size:15px;line-height:15px;color:#1f1f1f;">35</div>
<div class="t" style="left:563.80px;top:552.85px;font-size:15px;line-height:15px;color:#1f1f1f;transform:scaleX(0.9827);">27.05.2022</div>
<div class="t" style="left:646.10px;top:552.85px;font-size:15px;line-height:15px;color:#1f1f1f;transform:scaleX(1.0165);">FSKR/1/5/2022M</div>
<div class="t" style="left:816.10px;top:552.85px;font-size:15px;line-height:15px;color:#1f1f1f;transform:scaleX(0.9893);">27.05.2022</div>
<div class="t" style="left:906.30px;top:552.85px;font-size:15px;line-height:15px;color:#1f1f1f;transform:scaleX(0.9840);">27.05.2022</div>
<div class="t" style="left:993.40px;top:552.85px;font-size:15px;line-height:15px;color:#1f1f1f;transform:scaleX(0.9893);">27.05.2022</div>
<div class="t" style="left:1078.70px;top:552.85px;font-size:15px;line-height:15px;color:#1f1f1f;transform:scaleX(0.9900);">000167</div>
<div class="t" style="left:1141.20px;top:552.85px;font-size:15px;line-height:15px;color:#1f1f1f;transform:scaleX(0.9126);">PL</div>
<div style="position:absolute;left:1180px;top:544px;width:162px;height:33px;overflow:hidden;">
<div class="t" style="left:6.50px;top:8.85px;font-size:15px;line-height:15px;color:#1f1f1f;transform:scaleX(0.9138);">AEGON POWSZECHNE</div>
</div>
<div style="position:absolute;left:31px;top:609px;width:1311px;height:1px;background:#e2e2e2;"></div>
<div style="position:absolute;left:48px;top:584px;width:20px;height:20px;box-sizing:border-box;border:1.3px solid #a5a5a5;border-radius:4px;background:#fff;"></div>
<svg style="position:absolute;left:85px;top:578px;" width="30" height="30" viewBox="0 0 30 30" fill="none"><path d="M16.1 7.999999999999979 L24.3 16.199999999999978 L16.1 24.399999999999977 L7.900000000000002 16.199999999999978 Z" fill="#fb8c00" stroke="#fb8c00" stroke-width="2" stroke-linejoin="round"/></svg>
<svg style="position:absolute;left:140px;top:584px;" width="18" height="16" viewBox="0 0 18 16" fill="none"><path d="M4 7.5 L8 11.1 L15.3 4" stroke="#777" stroke-width="1"/></svg>
<div class="t" style="left:172.30px;top:585.05px;font-size:15px;line-height:15px;color:#1a7fc2;-webkit-text-stroke:0.35px #1a7fc2;transform:scaleX(1.0216);">FSKR/M0/22/36</div>
<svg style="position:absolute;left:298px;top:582.4px;" width="22" height="22" viewBox="0 0 22 22" fill="none"><path d="M3.9 2.4H11.3L17.6 8.6V19.4a1 1 0 0 1-1 1H3.9a1 1 0 0 1-1-1V3.4a1 1 0 0 1 1-1Z" stroke="#5a5a5a" stroke-width="1.6" fill="#fff"/><path d="M11.3 2.4V7.6a1 1 0 0 0 1 1H17.6" stroke="#5a5a5a" stroke-width="1.4"/><path d="M6 6.8H9.8M6 9.4H14.4" stroke="#9a9a9a" stroke-width="1"/><rect x="5.2" y="11.5" width="10.6" height="3.8" fill="#2f77c1"/><rect x="5.2" y="15.3" width="10.6" height="2.6" fill="#fff"/><path d="M5.6 15.3V18M10.5 11.5V18M15.4 15.3V18" stroke="#6a6a6a" stroke-width="0.9"/><path d="M5.2 18.2H15.8" stroke="#b8b8b8" stroke-width="1"/></svg>
<div class="t" style="left:339.70px;top:585.05px;font-size:15px;line-height:15px;color:#1f1f1f;transform:scaleX(0.8900);">FSKR</div>
<div class="t" style="left:422.50px;top:585.05px;font-size:15px;line-height:15px;color:#1f1f1f;transform:scaleX(0.9760);">M0</div>
<div class="t" style="left:531.70px;top:585.05px;font-size:15px;line-height:15px;color:#1f1f1f;">36</div>
<div class="t" style="left:563.80px;top:585.05px;font-size:15px;line-height:15px;color:#1f1f1f;transform:scaleX(0.9827);">27.05.2022</div>
<div class="t" style="left:646.10px;top:585.05px;font-size:15px;line-height:15px;color:#1f1f1f;transform:scaleX(1.0114);">FSKR/22/5/K</div>
<div class="t" style="left:816.10px;top:585.05px;font-size:15px;line-height:15px;color:#1f1f1f;transform:scaleX(0.9893);">27.05.2022</div>
<div class="t" style="left:906.30px;top:585.05px;font-size:15px;line-height:15px;color:#1f1f1f;transform:scaleX(0.9840);">26.05.2022</div>
<div class="t" style="left:993.40px;top:585.05px;font-size:15px;line-height:15px;color:#1f1f1f;transform:scaleX(0.9893);">27.05.2022</div>
<div class="t" style="left:1078.70px;top:585.05px;font-size:15px;line-height:15px;color:#1f1f1f;transform:scaleX(0.9900);">000167</div>
<div class="t" style="left:1141.20px;top:585.05px;font-size:15px;line-height:15px;color:#1f1f1f;transform:scaleX(0.9126);">PL</div>
<div style="position:absolute;left:1180px;top:577px;width:162px;height:32px;overflow:hidden;">
<div class="t" style="left:6.50px;top:8.05px;font-size:15px;line-height:15px;color:#1f1f1f;transform:scaleX(0.9138);">AEGON POWSZECHNE</div>
</div>
<div style="position:absolute;left:31px;top:642px;width:1311px;height:1px;background:#e2e2e2;"></div>
<div style="position:absolute;left:48px;top:617px;width:20px;height:20px;box-sizing:border-box;border:1.3px solid #a5a5a5;border-radius:4px;background:#fff;"></div>
<svg style="position:absolute;left:85px;top:611px;" width="30" height="30" viewBox="0 0 30 30" fill="none"><path d="M17 8.100000000000001 L25.2 16.3 L17 24.5 L8.8 16.3 Z" fill="#283593" stroke="#283593" stroke-width="2" stroke-linejoin="round"/></svg>
<svg style="position:absolute;left:140px;top:617px;" width="18" height="16" viewBox="0 0 18 16" fill="none"><path d="M4 7.5 L8 11.1 L15.3 4" stroke="#777" stroke-width="1"/></svg>
<div class="t" style="left:172.30px;top:618.15px;font-size:15px;line-height:15px;color:#1a7fc2;-webkit-text-stroke:0.35px #1a7fc2;transform:scaleX(1.0216);">FSKR/M0/22/37</div>
<svg style="position:absolute;left:298px;top:615.5px;" width="22" height="22" viewBox="0 0 22 22" fill="none"><path d="M3.9 2.4H11.3L17.6 8.6V19.4a1 1 0 0 1-1 1H3.9a1 1 0 0 1-1-1V3.4a1 1 0 0 1 1-1Z" stroke="#5a5a5a" stroke-width="1.6" fill="#fff"/><path d="M11.3 2.4V7.6a1 1 0 0 0 1 1H17.6" stroke="#5a5a5a" stroke-width="1.4"/><path d="M6 6.8H9.8M6 9.4H14.4" stroke="#9a9a9a" stroke-width="1"/><rect x="5.2" y="11.5" width="10.6" height="3.8" fill="#2f77c1"/><rect x="5.2" y="15.3" width="10.6" height="2.6" fill="#fff"/><path d="M5.6 15.3V18M10.5 11.5V18M15.4 15.3V18" stroke="#6a6a6a" stroke-width="0.9"/><path d="M5.2 18.2H15.8" stroke="#b8b8b8" stroke-width="1"/></svg>
<div class="t" style="left:339.70px;top:618.15px;font-size:15px;line-height:15px;color:#1f1f1f;transform:scaleX(0.8900);">FSKR</div>
<div class="t" style="left:422.50px;top:618.15px;font-size:15px;line-height:15px;color:#1f1f1f;transform:scaleX(0.9760);">M0</div>
<div class="t" style="left:531.70px;top:618.15px;font-size:15px;line-height:15px;color:#1f1f1f;">37</div>
<div class="t" style="left:563.80px;top:618.15px;font-size:15px;line-height:15px;color:#1f1f1f;transform:scaleX(0.9827);">27.05.2022</div>
<div class="t" style="left:646.10px;top:618.15px;font-size:15px;line-height:15px;color:#1f1f1f;transform:scaleX(1.0136);">FSKR/26/05/22</div>
<div class="t" style="left:816.10px;top:618.15px;font-size:15px;line-height:15px;color:#1f1f1f;transform:scaleX(0.9893);">26.05.2022</div>
<div class="t" style="left:906.30px;top:618.15px;font-size:15px;line-height:15px;color:#1f1f1f;transform:scaleX(0.9840);">26.05.2022</div>
<div class="t" style="left:993.40px;top:618.15px;font-size:15px;line-height:15px;color:#1f1f1f;transform:scaleX(0.9893);">26.05.2022</div>
<div class="t" style="left:1078.70px;top:618.15px;font-size:15px;line-height:15px;color:#1f1f1f;transform:scaleX(0.9900);">000167</div>
<div class="t" style="left:1141.20px;top:618.15px;font-size:15px;line-height:15px;color:#1f1f1f;transform:scaleX(0.9126);">PL</div>
<div style="position:absolute;left:1180px;top:609px;width:162px;height:33px;overflow:hidden;">
<div class="t" style="left:6.50px;top:9.15px;font-size:15px;line-height:15px;color:#1f1f1f;transform:scaleX(0.9138);">AEGON POWSZECHNE</div>
</div>
<div style="position:absolute;left:31px;top:447px;width:94px;height:1px;background:#d8d8d8;"></div>
<div style="position:absolute;left:164px;top:447px;width:1178px;height:1px;background:#d8d8d8;"></div>
<div style="position:absolute;left:31px;top:448px;width:94px;height:1px;background:#484848;"></div>
<div style="position:absolute;left:164px;top:448px;width:1178px;height:1px;background:#484848;"></div>
<div style="position:absolute;left:31px;top:449px;width:94px;height:1px;background:#c4c4c4;"></div>
<div style="position:absolute;left:164px;top:449px;width:1178px;height:1px;background:#c4c4c4;"></div>
<div style="position:absolute;left:31px;top:477px;width:94px;height:1px;background:#d8d8d8;"></div>
<div style="position:absolute;left:164px;top:477px;width:1178px;height:1px;background:#d8d8d8;"></div>
<div style="position:absolute;left:31px;top:478px;width:94px;height:1px;background:#484848;"></div>
<div style="position:absolute;left:164px;top:478px;width:1178px;height:1px;background:#484848;"></div>
<div style="position:absolute;left:31px;top:479px;width:94px;height:1px;background:#c4c4c4;"></div>
<div style="position:absolute;left:164px;top:479px;width:1178px;height:1px;background:#c4c4c4;"></div>
<div style="position:absolute;left:125px;top:448px;width:39px;height:31px;box-sizing:border-box;border:2.6px solid #0a79c0;"></div>
<div style="position:absolute;left:31px;top:645px;width:1311px;height:12px;background:#f1f1f1;"></div>
<div style="position:absolute;left:31px;top:645px;width:594px;height:12px;background:#d6d6d6;border-radius:6px;"></div>
<div style="position:absolute;left:1361px;top:92px;width:1px;height:579px;background:#e3e3e3;"></div>
<svg style="position:absolute;left:1362px;top:384px;" width="18" height="20" viewBox="0 0 18 20" fill="none"><path d="M13.6 3.2 L6.6 10 L13.6 16.8" stroke="#6a87a0" stroke-width="1.1"/></svg>
<div style="position:absolute;left:31px;top:671px;width:1356px;height:1px;background:#e5e5e5;"></div>
<svg style="position:absolute;left:708px;top:672px;" width="26" height="18" viewBox="0 0 26 18" fill="none"><path d="M4.6 13.6 L13 5.3 L21.6 13.6" stroke="#555" stroke-width="1.1"/></svg>
<svg style="position:absolute;left:44px;top:700px;" width="28" height="30" viewBox="0 0 28 30" fill="none"><path d="M11.3 25.3H4.2V3.7H16.2L20.5 8V12.7" stroke="#444" stroke-width="1.2" fill="none"/><path d="M16.2 3.7V7.4a0.6 0.6 0 0 0 0.6 0.6H20.5" stroke="#555" stroke-width="1.1"/><circle cx="16.8" cy="19.1" r="4.6" stroke="#444" stroke-width="1.2"/><path d="M20.1 22.4L23.9 26.2" stroke="#444" stroke-width="2.4" stroke-linecap="round"/><path d="M20.1 22.4L23.9 26.2" stroke="#fff" stroke-width="0.8" stroke-linecap="round"/></svg>
<div class="t" style="left:91.20px;top:706.45px;font-size:15px;line-height:15px;color:#1776b8;-webkit-text-stroke:0.35px #1776b8;transform:scaleX(1.0058);">Dokument</div>
<div class="t" style="left:178.70px;top:706.45px;font-size:15px;line-height:15px;color:#555;-webkit-text-stroke:0.35px #555;transform:scaleX(0.9807);">Dowód</div>
<div class="t" style="left:243.90px;top:706.45px;font-size:15px;line-height:15px;color:#555;-webkit-text-stroke:0.35px #555;transform:scaleX(1.0150);">Dowód z wymiarami kontrolingowymi</div>
<div class="t" style="left:512.90px;top:706.45px;font-size:15px;line-height:15px;color:#555;-webkit-text-stroke:0.35px #555;transform:scaleX(1.0167);">Historia operacji</div>
<div class="t" style="left:642.30px;top:706.45px;font-size:15px;line-height:15px;color:#555;-webkit-text-stroke:0.35px #555;">Szczegóły rozrachunków</div>
<div class="t" style="left:827.50px;top:706.45px;font-size:15px;line-height:15px;color:#555;-webkit-text-stroke:0.35px #555;transform:scaleX(0.9890);">Dowody sprzężone</div>
<div class="t" style="left:973.50px;top:706.45px;font-size:15px;line-height:15px;color:#555;-webkit-text-stroke:0.35px #555;transform:scaleX(0.9893);">Dodatkowe dane dla JPK</div>
<div class="t" style="left:1159.60px;top:706.45px;font-size:15px;line-height:15px;color:#555;-webkit-text-stroke:0.35px #555;transform:scaleX(1.0059);">Historia wysyłek JPK VAT</div>
<div style="position:absolute;left:1348px;top:696px;width:39px;height:37px;background:#f5f5f5;"></div>
<div style="position:absolute;left:1348px;top:696px;width:39px;height:37px;overflow:hidden;">
<div class="t" style="left:2.50px;top:10.45px;font-size:15px;line-height:15px;color:#cfcfcf;-webkit-text-stroke:0.35px #cfcfcf;">Korekty</div>
</div>
<svg style="position:absolute;left:1356px;top:704px;" width="18" height="22" viewBox="0 0 18 22" fill="none"><path d="M4.6 4.6 L11.2 11.2 L4.6 17.8" stroke="#333" stroke-width="1.2"/></svg>
<div style="position:absolute;left:81px;top:732.6px;width:89px;height:1.2px;background:#3d8bbd;"></div>
<div style="position:absolute;left:0px;top:733.5px;width:1417px;height:3px;background:linear-gradient(#c8c8c8,#a2a2a2 50%,#cfcfcf);"></div>
<div style="position:absolute;left:0px;top:736.5px;width:1417px;height:5px;background:#fcfcfc;"></div>
<div style="position:absolute;left:0px;top:741px;width:1418px;height:1px;background:#2a6d9a;"></div>
<div style="position:absolute;left:1417px;top:33px;width:1px;height:709px;background:#1c4587;"></div>
</body></html>
